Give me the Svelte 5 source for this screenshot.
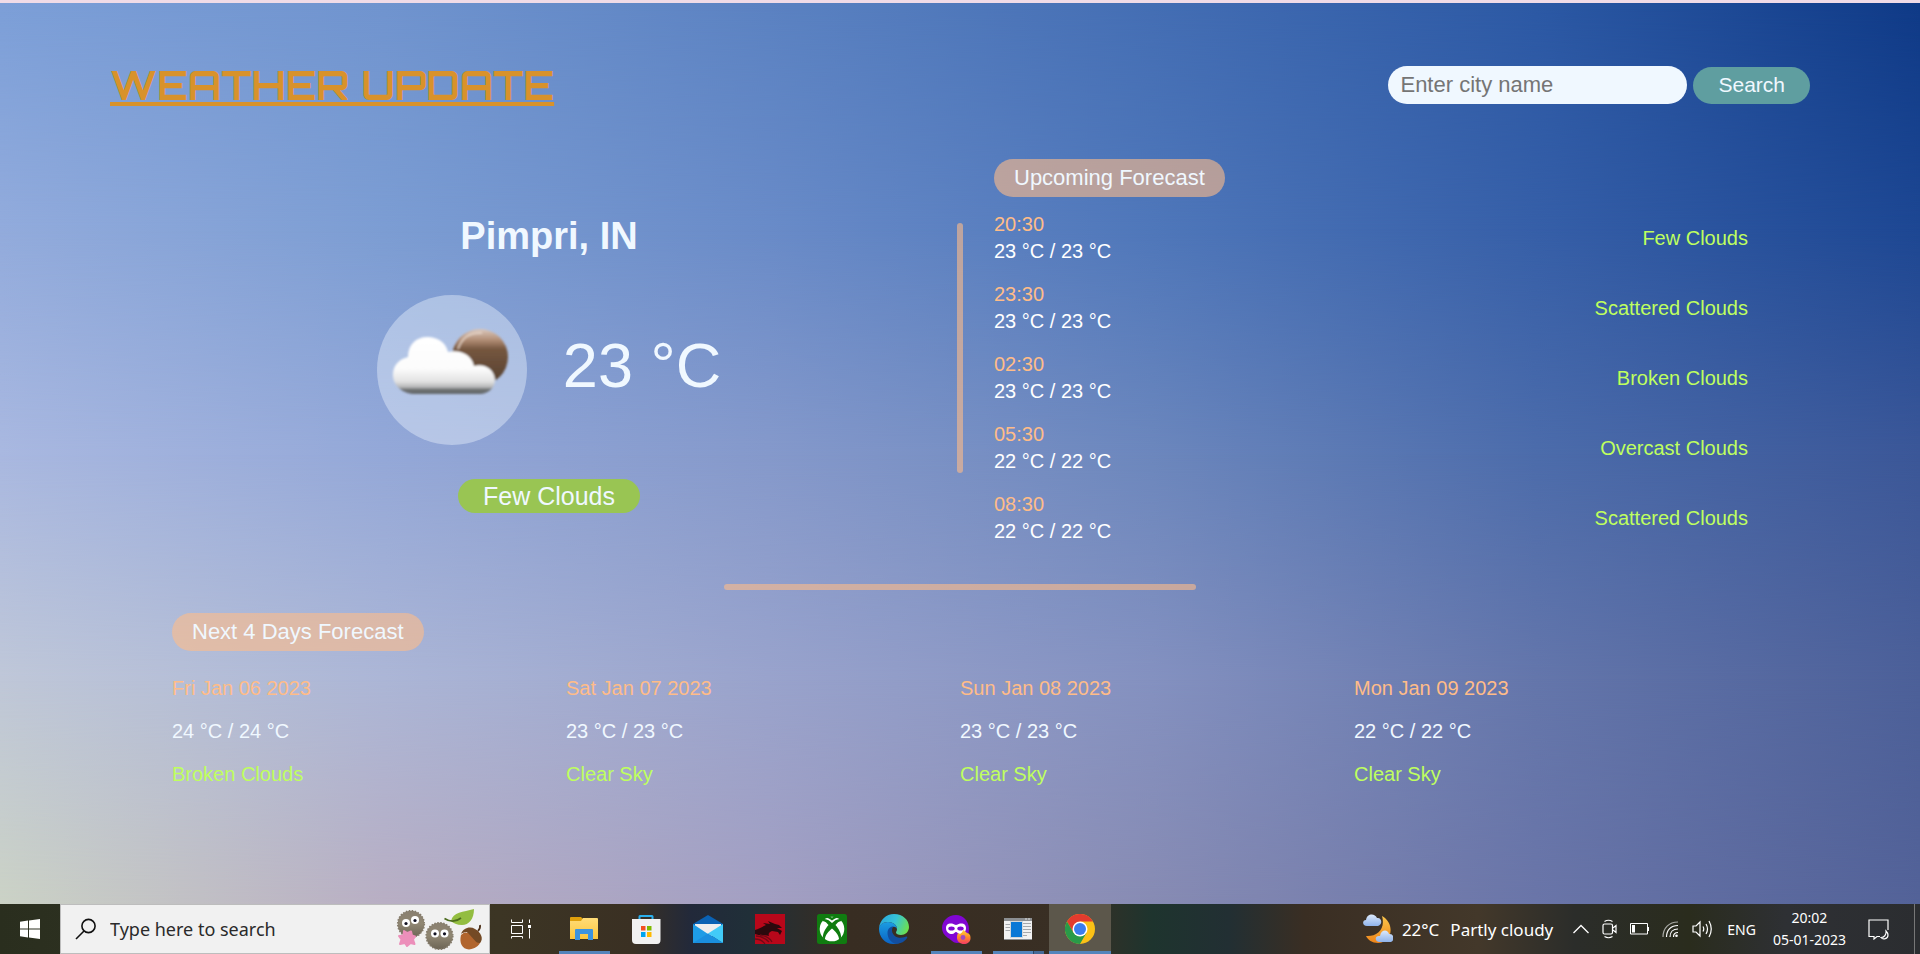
<script>
  const sky = [
    ['#7c9fd8', '#7094cf', '#5b82c2', '#446eb4', '#2c59a5', '#0f3a87'],
    ['#92abdc', '#7c9dd3', '#698bc8', '#4f77ba', '#365fa8', '#1d4793'],
    ['#a9b8e0', '#94a8d8', '#8599cb', '#6c87bd', '#4c6cab', '#3b5798'],
    ['#bfc7d8', '#acb6d6', '#99a3cc', '#8491c0', '#6476ab', '#4c6099'],
    ['#cbd2c5', '#b8aec3', '#a39fc2', '#878bb3', '#6a75a8', '#536298'],
  ];

  const hours = [
    { time: '20:30', temp: '23 °C / 23 °C', desc: 'Few Clouds' },
    { time: '23:30', temp: '23 °C / 23 °C', desc: 'Scattered Clouds' },
    { time: '02:30', temp: '23 °C / 23 °C', desc: 'Broken Clouds' },
    { time: '05:30', temp: '22 °C / 22 °C', desc: 'Overcast Clouds' },
    { time: '08:30', temp: '22 °C / 22 °C', desc: 'Scattered Clouds' },
  ];

  const days = [
    { date: 'Fri Jan 06 2023', temp: '24 °C / 24 °C', desc: 'Broken Clouds' },
    { date: 'Sat Jan 07 2023', temp: '23 °C / 23 °C', desc: 'Clear Sky' },
    { date: 'Sun Jan 08 2023', temp: '23 °C / 23 °C', desc: 'Clear Sky' },
    { date: 'Mon Jan 09 2023', temp: '22 °C / 22 °C', desc: 'Clear Sky' },
  ];

  let city = $state('');
  let query = $state('');
</script>

<div class="screen">
  <main class="page">
    <div class="sky" aria-hidden="true">
      {#each sky as stops, i}
        <div class="band band{i}" style="background-image: linear-gradient(90deg, {stops.join(', ')})"></div>
      {/each}
    </div>

    <header class="top">
      <h1>WEATHER UPDATE</h1>
      <form class="search" onsubmit={(e) => e.preventDefault()}>
        <input type="text" placeholder="Enter city name" aria-label="Enter city name" bind:value={city} />
        <button type="submit">Search</button>
      </form>
    </header>

    <section class="today">
      <div class="current">
        <h2>Pimpri, IN</h2>
        <div class="reading">
          <div class="disc">
            <svg viewBox="0 0 150 150" width="150" height="150" aria-hidden="true">
              <defs>
                <linearGradient id="sun" x1="0" y1="0" x2="0" y2="1">
                  <stop offset="0" stop-color="#dcc9bd" />
                  <stop offset=".2" stop-color="#b08c74" />
                  <stop offset=".36" stop-color="#75563f" />
                  <stop offset="1" stop-color="#54402f" />
                </linearGradient>
                <linearGradient id="cloud" gradientUnits="userSpaceOnUse" x1="0" y1="42" x2="0" y2="99">
                  <stop offset="0" stop-color="#fff" />
                  <stop offset=".55" stop-color="#fcfcfc" />
                  <stop offset=".78" stop-color="#e2e2e2" />
                  <stop offset=".88" stop-color="#b5b6b7" />
                  <stop offset=".92" stop-color="#6f7274" />
                  <stop offset="1" stop-color="#626669" />
                </linearGradient>
                <filter id="soft"><feGaussianBlur stdDeviation=".8" /></filter>
              </defs>
              <g filter="url(#soft)">
                <circle cx="103" cy="62" r="28" fill="url(#sun)" />
                <path d="M81 54C85 42 93 37 105 38" fill="none" stroke="#e8d8cc" stroke-width="2" opacity=".75" />
                <path d="M36 99C24 98 15 89 16 78C17 69 23 64 31 62C31 49 40 41 52 42C62 43 69 48 71 57C82 54 95 59 97 71C107 68 117 74 118 84C118 93 112 98 104 99Z" fill="url(#cloud)" />
              </g>
            </svg>
          </div>
          <p class="degrees">23 °C</p>
        </div>
        <p class="sky-state">Few Clouds</p>
      </div>

      <div class="rule-v"></div>

      <div class="upcoming">
        <h3 class="chip">Upcoming Forecast</h3>
        <ul>
          {#each hours as h}
            <li>
              <div>
                <p class="when">{h.time}</p>
                <p class="temp">{h.temp}</p>
              </div>
              <p class="desc">{h.desc}</p>
            </li>
          {/each}
        </ul>
      </div>
    </section>

    <div class="rule-h"></div>

    <section class="next">
      <h3 class="chip">Next 4 Days Forecast</h3>
      <div class="days">
        {#each days as d}
          <div class="day">
            <p class="when">{d.date}</p>
            <p class="temp cool">{d.temp}</p>
            <p class="desc">{d.desc}</p>
          </div>
        {/each}
      </div>
    </section>
  </main>

  <footer class="taskbar">
    <button class="start" aria-label="Start">
      <svg viewBox="0 0 20 20" width="20" height="20"><path fill="#fff" d="M0 2.8L8 1.6V9.6H0ZM9 1.4L20 0V9.6H9ZM0 10.5H8V18.4L0 17.3ZM9 10.5H20V20L9 18.6Z" /></svg>
    </button>

    <label class="find">
      <svg viewBox="0 0 22 22" width="22" height="22" fill="none" stroke="#111" stroke-width="1.6"><circle cx="13.5" cy="8" r="6.6" /><path d="M9 13L1 21" /></svg>
      <input type="text" placeholder="Type here to search" aria-label="Type here to search" bind:value={query} />
      <svg viewBox="0 0 90 46" width="90" height="46" aria-hidden="true">
        <defs>
          <linearGradient id="fuzz" x1="0" y1="0" x2="0" y2="1"><stop offset="0" stop-color="#8a8070" /><stop offset=".5" stop-color="#8f8672" /><stop offset="1" stop-color="#6c6455" /></linearGradient>
        </defs>
        <circle cx="16" cy="18" r="13.3" fill="url(#fuzz)" stroke="#857c6c" stroke-width="1.6" stroke-dasharray="1.5 1.5" />
        <circle cx="11" cy="17" r="4" fill="#fff" /><circle cx="20" cy="14" r="4" fill="#fff" />
        <circle cx="11" cy="17.5" r="1.6" fill="#112" /><circle cx="20" cy="14.5" r="1.6" fill="#112" />
        <path d="M9 25L12.5 27L16 25.5L17 29.500L20 30.500L18 33.500L19.500 38L15.500 37L12 40L10 37L5 38L6.500 33.500L4 30L8.500 29.500Z" fill="#ec8fba" stroke="#ec8fba" stroke-width="2" stroke-linejoin="round" />
        <circle cx="44.500" cy="30" r="13.300" fill="url(#fuzz)" stroke="#857c6c" stroke-width="1.600" stroke-dasharray="1.500 1.500" />
        <circle cx="40" cy="27.500" r="4" fill="#fff" /><circle cx="49.500" cy="27.500" r="4" fill="#fff" />
        <circle cx="40" cy="27.800" r="1.600" fill="#112" /><circle cx="49.500" cy="27.800" r="1.600" fill="#112" />
        <path d="M56 15C58 6 68 6 79 3C79 13 74 19 67 19C62 19 58 17 56 15Z" fill="#93bd41" />
        <path d="M49.500 12.500C55 16 61 16 66 12" fill="none" stroke="#4c6b1e" stroke-width="1.700" />
        <path d="M66 29C64 37 67 43 74 43.500C81 43 86 38 86 33Z" fill="#b1652e" />
        <path d="M66 28C68 22 75 20 80 23C86 26 89 33 85 37C80 37 74 32 72 26C69 26 67 27 66 28Z" fill="#744a25" />
        <path d="M66 29C69 26 71 26 73 27L83 38L79 42L69 39Z" fill="#b1652e" />
        <path d="M83 25C85 23 85.500 22 85 19" fill="none" stroke="#4f321b" stroke-width="1.800" />
      </svg>
    </label>

    <button class="view" aria-label="Task View">
      <svg viewBox="0 0 22 20" width="22" height="20" fill="none" stroke="#fff" stroke-width="1"><path d="M1.500 .500V3.500H12.500V.500M1.500 6.500H12.500V14.500H1.500ZM1.500 19.500V17.500H12.500V19.500M19.500 .500V4M19.500 10V19.500" /><path d="M18 6H21V9H18Z" fill="#fff" stroke="none" /></svg>
    </button>

    <nav class="apps" aria-label="Open apps">
      <button class="app open" aria-label="File Explorer">
        <svg viewBox="0 0 30 30" width="30" height="30">
          <defs><linearGradient id="fold" x1="0" y1="0" x2="0" y2="1"><stop offset="0" stop-color="#ffdc78" /><stop offset="1" stop-color="#fcc63c" /></linearGradient></defs>
          <path d="M1 4Q1 3 2 3H12L14 5V9H1Z" fill="#dfa00c" />
          <path d="M1 7H12L14 4H28Q29 4 29 5V25H1Z" fill="url(#fold)" />
          <path d="M6 26V16Q6 15 7 15H23Q24 15 24 16V26H19V20H11V26Z" fill="#3b93df" />
        </svg>
      </button>
      <button class="app" aria-label="Microsoft Store">
        <svg viewBox="0 0 30 30" width="30" height="30">
          <path d="M8.500 7V2.500Q8.500 2 9 2H21Q21.500 2 21.500 2.500V7" fill="none" stroke="#2ab0ee" stroke-width="2" />
          <path d="M1 5H29.500V26Q29.500 30 26 30H5Q1 30 1 26Z" fill="#f1f1f1" />
          <path d="M10 12H14.500V16.500H10Z" fill="#f25022" /><path d="M16 12H20.500V16.500H16Z" fill="#7fba00" />
          <path d="M10 18H14.500V23H10Z" fill="#00a4ef" /><path d="M16 18H20.500V23H16Z" fill="#ffb900" />
        </svg>
      </button>
      <button class="app" aria-label="Mail">
        <svg viewBox="0 0 30 30" width="30" height="30">
          <path d="M0 10L15 1L30 10V12H0Z" fill="#0a62b4" /><path d="M2 10H28V22H2Z" fill="#eee" />
          <path d="M0 10L15 20L30 29H0Z" fill="#1e9ce6" /><path d="M30 10V29L15 19.500Z" fill="#42cbf8" />
          <path d="M0 29L15 19.500L30 29Z" fill="#1a8fdf" />
        </svg>
      </button>
      <button class="app" aria-label="Dragon">
        <svg viewBox="0 0 30 30" width="30" height="30">
          <path d="M0 0H30V30H0Z" fill="#b8071a" />
          <path d="M0 16C4 15 7 13 11 11L8 9L15 10L13 7L20 10L24 11L27 14L22 14L27 17L25 21L23 18L17 17C14 18 13 20 14 22C8 20 5 22 0 20Z" fill="#2b090d" />
          <path d="M1 22C7 22 10 24 14 28M0 25C5 25 8 27 10 30M5 21C11 22 15 24 17 28" fill="none" stroke="#6f0914" stroke-width="1.300" />
        </svg>
      </button>
      <button class="app" aria-label="Xbox">
        <svg viewBox="0 0 30 30" width="30" height="30">
          <rect width="30" height="30" rx="2.500" fill="#107c10" /><circle cx="15" cy="15" r="12.300" fill="#fff" />
          <path d="M7 3.500C10 3 13 5 15 6.500C17 5 20 3 23 3.500C20 2 17.500 2 15 3.500C12.500 2 10 2 7 3.500Z" fill="#107c10" />
          <path d="M6.500 5C10 4.500 13 7 15 9C17 7 20 4.500 23.500 5L25 7C22.500 6.500 20 9 18.500 11C22 15 24.500 20 24 23.500L22 26C22.500 21.500 18 17 15 14.500C12 17 7.500 21.500 8 26L6 23.500C5.500 20 8 15 11.500 11C10 9 7.500 6.500 5 7Z" fill="#107c10" />
        </svg>
      </button>
      <button class="app" aria-label="Edge">
        <svg viewBox="0 0 30 30" width="30" height="30">
          <defs>
            <linearGradient id="e1" x1="0" y1=".3" x2="1" y2=".6"><stop offset="0" stop-color="#2aa8dc" /><stop offset=".5" stop-color="#36c3d8" /><stop offset="1" stop-color="#6de04d" /></linearGradient>
            <linearGradient id="e2" x1="0" y1="0" x2="0" y2="1"><stop offset="0" stop-color="#1b9de2" /><stop offset="1" stop-color="#0b63c4" /></linearGradient>
          </defs>
          <path d="M0 14C1 6 7 0 15 0C24 0 30 6 30 13C30 18 26 21 22 21C19 21 17 20 17 18.500C17 17.500 18 17 18 15C18 11 14 8 9 8C4 8 1 11 0 14Z" fill="url(#e1)" />
          <path d="M0 15C0 11 4 8 9 8C14 8 18 11 18 15C16 11 11 13 11 18C11 24 15 28 20 29C8 33 0 24 0 15Z" fill="url(#e2)" />
          <path d="M8.500 19C8.500 14 12 12.500 14.500 12.500C11.500 15 13 22 19 23.500C23 24.500 26 22.500 27.500 22.500C28.500 22.500 28.500 23.500 28 24C26 27.500 21.500 30 17 29.800C12 29 8.500 24 8.500 19Z" fill="#124e9f" />
        </svg>
      </button>
      <button class="app open" aria-label="Private browsing">
        <svg viewBox="0 0 30 30" width="30" height="30">
          <defs><linearGradient id="fx" x1="0" y1="0" x2="0" y2="1"><stop offset="0" stop-color="#ffd23a" /><stop offset=".5" stop-color="#ff8a2b" /><stop offset="1" stop-color="#f53a66" /></linearGradient></defs>
          <path d="M15 1C22 1 28 7 28 15C28 23 22 29 16 29C12 29 11 26 7 24C3 21 1 18 1 14C1 7 7 1 15 1Z" fill="#8106d3" />
          <path d="M5 14C5 10 8 9 11 9.500C13 10 14 11 15 11C16 11 17 10 19 9.500C22 9 25 10 25 14C25 18 22 20 19 20C17 20 16 18 15 18C14 18 13 20 11 20C8 20 5 18 5 14Z" fill="#fff" />
          <ellipse cx="10.500" cy="14.500" rx="3.200" ry="2" fill="#8106d3" /><ellipse cx="19.500" cy="14.500" rx="3.200" ry="2" fill="#8106d3" />
          <path d="M17 19L19 20C20 19 22 18 22 16C26 18 26 20 27 19L29 21C31 27 27 30 23 30C18 30 14 26 17 19Z" fill="url(#fx)" />
          <circle cx="22" cy="23.500" r="2.400" fill="#a04ac0" />
        </svg>
      </button>
      <button class="app open many" aria-label="Windows">
        <svg viewBox="0 0 30 30" width="30" height="30">
          <path d="M1 4H29V26H1Z" fill="#f2f2f2" /><path d="M1 4H29V7H1ZM1 25H29V26H1Z" fill="#8c8f92" />
          <path d="M22 5H24M25 5H27" stroke="#ddd" /><path d="M2.500 10.500H7M2.500 13.500H7M2.500 16.500H7M20 9.500H28M20 12.500H28M20 15.500H28M20 18.500H28M20 21.500H24" stroke="#a6a9ac" fill="none" />
          <path d="M7.500 7.500H19.500V23.500H7.500Z" fill="#0a78d6" stroke="#d5d8da" />
        </svg>
      </button>
      <button class="app open active" aria-label="Chrome">
        <svg viewBox="0 0 30 30" width="30" height="30">
          <circle cx="15" cy="15" r="15" fill="#fbc116" />
          <path d="M2 7.500A15 15 0 0 1 28 7.500H15L8.500 18.700Z" fill="#e33b2e" />
          <path d="M2 7.500A15 15 0 0 0 15 30L21.500 18.700H15L8.500 18.700Z" fill="#299a49" />
          <circle cx="15" cy="15" r="7.500" fill="#fff" /><circle cx="15" cy="15" r="6" fill="#3b7ded" />
        </svg>
      </button>
    </nav>

    <div class="tray">
      <button class="weather">
        <svg viewBox="0 0 30 30" width="30" height="30" aria-hidden="true">
          <defs>
            <linearGradient id="moon" x1="0" y1="0" x2="0" y2="1"><stop offset="0" stop-color="#fcc64b" /><stop offset="1" stop-color="#ee8419" /></linearGradient>
            <linearGradient id="puff" x1="0" y1="0" x2="0" y2="1"><stop offset="0" stop-color="#dce9fb" /><stop offset="1" stop-color="#8fb3ea" /></linearGradient>
          </defs>
          <path d="M19 2C32 9 30 28 15 29C9 29 5 26 3 22C13 23 23 16 19 2Z" fill="url(#moon)" />
          <path d="M4 12C-1 12 -1 6 3 6C4 -1 12 -1 14 4C19 3 20 11 15 12Z" fill="url(#puff)" />
          <path d="M16 28C11 27 12 21 17 22C18 15 25 15 26 20C31 19 32 27 28 28Z" fill="url(#puff)" />
        </svg>
        <span class="deg">22°C</span>
        <span>Partly cloudy</span>
      </button>
      <div class="icons">
        <svg viewBox="0 0 16 10" width="16" height="10" fill="none" stroke="#fff" stroke-width="1.300"><path d="M.500 9L8 1.500L15.500 9" /></svg>
        <svg viewBox="0 0 15 20" width="15" height="20" fill="none" stroke="#fff" stroke-width="1.200"><path d="M2.500 2.500Q6.500 0 10.500 2.500M2.500 17.500Q6.500 20 10.500 17.500" /><rect x="1" y="5" width="9.500" height="10" rx="1.500" /><path d="M11 9L14 6.500V13.500L11 11" /></svg>
        <svg viewBox="0 0 19 12" width="19" height="12"><path d="M.500 .500H17.500V11H.500Z" fill="none" stroke="#fff" /><path d="M2 2H5V9.500H2ZM18 4H19V8H18Z" fill="#fff" /></svg>
        <svg viewBox="0 0 17 17" width="17" height="17" fill="none" stroke="#fff" stroke-width="1.200"><path d="M1 16C1 7 7 1 16 1" opacity=".6" /><path d="M4.500 16C4.500 9 9 4.500 16 4.500M8 16C8 11 11 8 16 8M11.500 16C11.500 13 13 11.500 16 11.500" /><circle cx="14.500" cy="14.800" r="1.300" fill="#fff" stroke="none" /></svg>
        <svg viewBox="0 0 21 18" width="21" height="18" fill="none" stroke="#fff" stroke-width="1.200"><path d="M1 6H4L8 2V16L4 12H1Z" /><path d="M11 6.500Q12.500 9 11 11.500M14 4Q17 9 14 14M17 1Q21.500 9 17 17" /></svg>
      </div>
      <span class="lang">ENG</span>
      <div class="clock"><span>20:02</span><span>05-01-2023</span></div>
      <button class="note" aria-label="Notifications">
        <svg viewBox="0 0 21 21" width="21" height="21" fill="none" stroke="#fff" stroke-width="1.200"><path d="M12 17.500H9L6 20V17.500H1V1H20V11" /><path d="M18 12C18.500 16 16 18.500 13 18.500C15 21 20 20 20 16C20 14 19 13 18 12Z" /></svg>
      </button>
    </div>
  </footer>
</div>

<style>
  :global(body) { margin: 0; background: #8599cb; }

  .screen {
    min-height: 100vh;
    display: flex;
    flex-direction: column;
    font-family: "Liberation Sans", Arial, sans-serif;
    color: aliceblue;
  }
  h1, h2, h3, p, ul { margin: 0; padding: 0; font-weight: 400; }
  button { font: inherit; color: inherit; border: 0; margin: 0; padding: 0; background: none; }
  svg { display: block; flex: none; }

  .page {
    flex: 1;
    position: relative;
    isolation: isolate;
    box-sizing: border-box;
    border-top: 3px solid #f0dbe7;
    display: flex;
    flex-direction: column;
  }
  .sky { position: absolute; inset: 0; z-index: -1; }
  .band { position: absolute; inset: 0; }
  .band1 { mask-image: linear-gradient(transparent 0%, #000 25%); }
  .band2 { mask-image: linear-gradient(transparent 25%, #000 50%); }
  .band3 { mask-image: linear-gradient(transparent 50%, #000 75%); }
  .band4 { mask-image: linear-gradient(transparent 75%, #000 100%); }

  .top {
    display: flex;
    align-items: center;
    justify-content: space-between;
    padding: 57px 110px 48px;
  }
  h1 {
    font: 700 40px/50px Orbitron, "DejaVu Sans", sans-serif;
    color: #d8922b;
    text-decoration: underline;
    text-decoration-thickness: 4px;
    text-underline-offset: 2px;
    text-decoration-skip-ink: none;
  }
  .search { display: flex; align-items: center; gap: 6px; }
  .search input {
    width: 299px;
    height: 38px;
    box-sizing: border-box;
    border: 0;
    border-radius: 19px;
    padding: 0 12px;
    background: aliceblue;
    color: #333;
    font: 22px "Liberation Sans", Arial, sans-serif;
  }
  .search input::placeholder { color: #757575; }
  .search button {
    height: 37px;
    padding: 0 25px;
    border-radius: 19px;
    background: cadetblue;
    font-size: 21px;
  }

  .today {
    display: grid;
    grid-template-columns: 1fr 6px 1fr;
    column-gap: 31px;
    padding: 0 172px;
  }
  .current { display: flex; flex-direction: column; align-items: center; padding-top: 56px; }
  h2 { font-weight: 700; font-size: 38px; line-height: 44px; }
  .reading { display: flex; align-items: center; gap: 36px; margin-top: 37px; }
  .disc { width: 150px; height: 150px; border-radius: 50%; background: rgba(240, 248, 255, .4); }
  .degrees { font-size: 63px; line-height: 74px; padding-bottom: 10px; }
  .sky-state {
    margin-top: 34px;
    padding: 1px 25px 0;
    border-radius: 17px;
    background: #99c553;
    font-size: 25px;
    line-height: 33px;
  }
  .rule-v { height: 250px; margin-top: 65px; border-radius: 3px; background: rgba(255, 188, 136, .6); }

  .chip {
    width: fit-content;
    padding: 0 20px;
    border-radius: 19px;
    background: rgba(255, 188, 136, .6);
    font-size: 22px;
    line-height: 38px;
  }
  .upcoming { padding-top: 1px; }
  .upcoming ul { list-style: none; margin-top: 14px; display: flex; flex-direction: column; gap: 16px; }
  .upcoming li { display: flex; align-items: center; justify-content: space-between; }
  .when, .temp, .desc { font-size: 20px; line-height: 27px; }
  .when { color: #ffbc88; }
  .temp { color: #fff; }
  .cool { color: aliceblue; }
  .desc { color: #bfff5e; }

  .rule-h { width: 30%; max-width: 472px; height: 6px; margin: 39px auto 0; border-radius: 3px; background: rgba(255, 188, 136, .6); }

  .next { padding: 23px 172px 60px; }
  .days { display: grid; grid-template-columns: repeat(4, 1fr); margin-top: 24px; }
  .day { display: flex; flex-direction: column; gap: 16px; }

  .taskbar {
    height: 50px;
    display: flex;
    align-items: stretch;
    font-family: "Noto Sans", "Open Sans", sans-serif;
    color: #fff;
    background: linear-gradient(90deg, #2a2e1e 0%, #2c3020 4%, #3c3524 26%, #3a3023 33%, #22293a 36%, #202f38 39%, #382d22 44%, #392f24 56%, #1e342e 60%, #222f33 64%, #3a2e23 68%, #43382a 77%, #2b2d2a 82%, #2a2c1d 88%, #2e3034 93%, #2b2d30 100%);
  }
  .start { width: 60px; display: grid; place-items: center; }
  .find {
    width: 430px;
    box-sizing: border-box;
    border: 1px solid #bdbdbd;
    background: #f1f1f1;
    display: flex;
    align-items: center;
    gap: 13px;
    padding: 0 4px 0 14px;
  }
  .find input {
    flex: 1;
    min-width: 0;
    border: 0;
    padding: 0;
    background: none;
    color: #222;
    font: 18px "Noto Sans", "Open Sans", sans-serif;
  }
  .find input::placeholder { color: #2a2a2a; opacity: 1; }
  .view { width: 63px; padding-right: 2px; display: grid; place-items: center; }
  .apps { display: flex; }
  .app { width: 62px; display: grid; place-items: center; border-bottom: 3px solid transparent; padding-top: 3px; box-sizing: border-box; }
  .open {
    background: linear-gradient(#5484bb, #5484bb) center bottom / 51px 3px no-repeat border-box;
  }
  .many { background: linear-gradient(90deg, #5484bb 40px, #2c4664 40px, #2c4664 41px, #456a98 41px) center bottom / 51px 3px no-repeat border-box; }
  .active { background: linear-gradient(#5484bb, #5484bb) center bottom / 100% 3px no-repeat border-box, #5c574b; }

  .tray { margin-left: auto; display: flex; align-items: center; border-right: 1px solid #777; margin-right: 5px; }
  .weather { display: flex; align-items: center; font-size: 17px; }
  .weather .deg { margin: 0 11px 0 9px; }
  .icons { display: flex; align-items: center; gap: 13px; margin-left: 20px; }
  .lang { font-size: 14px; margin-left: 14px; }
  .clock { display: flex; flex-direction: column; align-items: center; font-size: 14px; line-height: 22px; margin-left: 17px; }
  .note { margin: 0 25px 0 22px; }
</style>
